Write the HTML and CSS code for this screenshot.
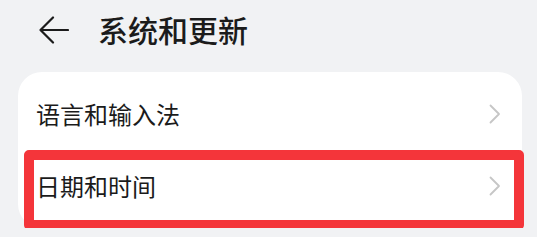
FILE: index.html
```html
<!DOCTYPE html>
<html lang="zh-CN">
  <head>
    <meta charset="UTF-8" />
    <meta name="viewport" content="width=device-width, initial-scale=1.0" />
    <title>系统和更新</title>
    <link rel="stylesheet" href="styles.css">
  </head>
  <body>
    <div class="header">
      <svg class="backIcon" width="32" height="28" viewBox="0 0 32 28">
        <path d="M16 1.5 L3.5 14 L16 26.5 M3.5 14 H31" fill="none" stroke="#1b1b1b" stroke-width="2.2" stroke-linecap="round" stroke-linejoin="round" />
      </svg>
      <div class="title">系统和更新</div>
    </div>
    <div class="card">
      <div class="row">
        <span class="rowText">语言和输入法</span>
        <svg class="chevron" width="12" height="20" viewBox="0 0 12 20">
          <path d="M1.5 1.5 L10 10 L1.5 18.5" fill="none" stroke="#c6c6c6" stroke-width="1.8" stroke-linecap="round" stroke-linejoin="round" />
        </svg>
      </div>
      <div class="row">
        <span class="rowText">日期和时间</span>
        <svg class="chevron" width="12" height="20" viewBox="0 0 12 20">
          <path d="M1.5 1.5 L10 10 L1.5 18.5" fill="none" stroke="#c6c6c6" stroke-width="1.8" stroke-linecap="round" stroke-linejoin="round" />
        </svg>
      </div>
      <div class="highlight"></div>
    </div>
  </body>
</html>
```

FILE: styles.css
```css
body {
  margin: 0;
  background: #f1f2f4;
  font-family: "Noto Sans CJK SC", "Noto Sans", sans-serif;
  color: #1b1b1b;
}

.header {
  height: 58px;
  display: flex;
  align-items: center;
  padding-left: 37px;
}
.backIcon {
  display: block;
  margin-top: 1px;
}
.title {
  margin-left: 29px;
  font-size: 30px;
  font-weight: 500;
  line-height: 1;
}

.card {
  position: relative;
  margin: 14px 15px 0 18px;
  padding: 6px 0;
  background: #fff;
  border-radius: 24px;
}
.row {
  height: 72px;
  display: flex;
  align-items: center;
  justify-content: space-between;
  padding: 0 21px 0 18px;
}
.rowText {
  font-size: 24px;
  line-height: 1;
}
.chevron {
  display: block;
}

.highlight {
  position: absolute;
  left: 6px;
  top: 78px;
  width: 500px;
  height: 80px;
  box-sizing: border-box;
  border: 10px solid #f4353a;
  border-radius: 5px;
}
```
